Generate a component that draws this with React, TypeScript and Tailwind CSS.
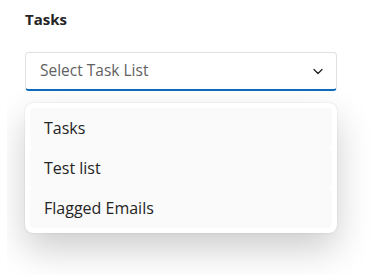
export default function App() {
  const lists = ["Tasks", "Test list", "Flagged Emails"]

  return (
    <div className="h-[280px] w-[386px] overflow-hidden bg-white pl-[7px] font-['Open_Sans',sans-serif] text-[#242424]">
      <div className="h-[275px] overflow-hidden pl-[18px] pt-[9px]">
        <h3 className="text-[15px] font-bold leading-5">Tasks</h3>

        <div className="mt-[23px] flex h-[39px] w-[312px] items-center justify-between rounded-[4px] border border-b-2 border-[#e0e0e0] border-b-[#0f6cbd] bg-white pl-[14px] pr-[12px]">
          <span className="text-[15.5px] text-[#616161]">Select Task List</span>
          <svg width="12" height="12" viewBox="0 0 12 12" fill="none">
            <path d="M2 4.5 6 8.5 10 4.5" stroke="#242424" strokeWidth="1.3" strokeLinecap="round" strokeLinejoin="round" />
          </svg>
        </div>

        <div className="mt-[12px] w-[312px] rounded-[8px] bg-white p-[5px] shadow-[0_16px_36px_rgba(0,0,0,0.2),0_0_2px_rgba(0,0,0,0.12)]">
          {lists.map((name) => (
            <div
              key={name}
              className="flex h-[40px] items-center rounded-[4px] bg-[#fafafa] pl-[14px] text-[16px] text-[#242424]"
            >
              {name}
            </div>
          ))}
        </div>
      </div>
    </div>
  )
}
